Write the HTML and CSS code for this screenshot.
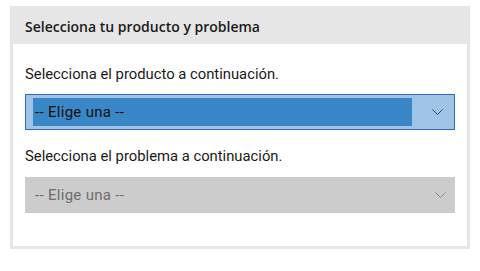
FILE: index.html
```html
<!DOCTYPE html>
<html lang="es">
<head>
<meta charset="utf-8">
<title>Selecciona tu producto y problema</title>
<link rel="stylesheet" href="styles.css">
</head>
<body>
<section class="panel">
  <header class="panel-header">Selecciona tu producto y problema</header>
  <div class="panel-body">
    <label class="field-label label-product">Selecciona el producto a continuación.</label>
    <div class="select select-active">
      <span class="select-value">-- Elige una --</span>
      <svg class="chevron" width="11" height="6" viewBox="0 0 11 6"><path d="M0.5 0.5 L5.5 5.5 L10.5 0.5" fill="none" stroke="currentColor" stroke-width="1"/></svg>
    </div>
    <label class="field-label label-problem">Selecciona el problema a continuación.</label>
    <div class="select select-disabled">
      <span class="select-value">-- Elige una --</span>
      <svg class="chevron" width="11" height="6" viewBox="0 0 11 6"><path d="M0.5 0.5 L5.5 5.5 L10.5 0.5" fill="none" stroke="currentColor" stroke-width="1"/></svg>
    </div>
  </div>
</section>
</body>
</html>
```

FILE: styles.css
```css
html, body {
  margin: 0;
  padding: 0;
  background: #ffffff;
}
body {
  font-family: Roboto, "Open Sans", sans-serif;
  color: #1b1b1b;
  padding: 6px 0 0 10px;
}
.panel {
  width: 460px;
  display: flex;
  flex-direction: column;
}
.panel-header {
  height: 38px;
  box-sizing: border-box;
  background: #e6e6e6;
  padding: 11px 0 0 15px;
  font-family: "Open Sans", "Noto Sans", sans-serif;
  font-size: 14px;
  font-weight: 600;
  line-height: 20px;
  color: #1a1a1a;
}
.panel-body {
  border: 3px solid #e6e6e6;
  border-top: none;
  padding: 20px 12px 33px 12px;
  display: flex;
  flex-direction: column;
}
.field-label {
  display: block;
  font-size: 14.8px;
  line-height: 20px;
  color: #1a1a1a;
}
.label-problem {
  margin-top: 16px;
}
.select {
  height: 36px;
  box-sizing: border-box;
  display: flex;
  align-items: center;
  font-size: 15px;
  line-height: 20px;
}
.select-value {
  letter-spacing: 0.3px;
}
.label-product + .select {
  margin-top: 10px;
}
.label-problem + .select {
  margin-top: 11px;
}
.select-active {
  border: 1px solid #2a6db5;
  background: #9fc4e6;
  padding: 3px 11px 3px 7px;
}
.select-active .select-value {
  flex: 0 0 377px;
  align-self: stretch;
  display: flex;
  align-items: center;
  background: #3a87c8;
  padding-left: 2px;
  color: #101010;
}
.select-active .chevron {
  margin-left: auto;
  color: #2d4a68;
}
.select-disabled {
  background: #cccccc;
  padding: 0 9px 0 10px;
}
.select-disabled .select-value {
  color: #6e6e6e;
}
.select-disabled .chevron {
  margin-left: auto;
  color: #8a8a8a;
}
```
